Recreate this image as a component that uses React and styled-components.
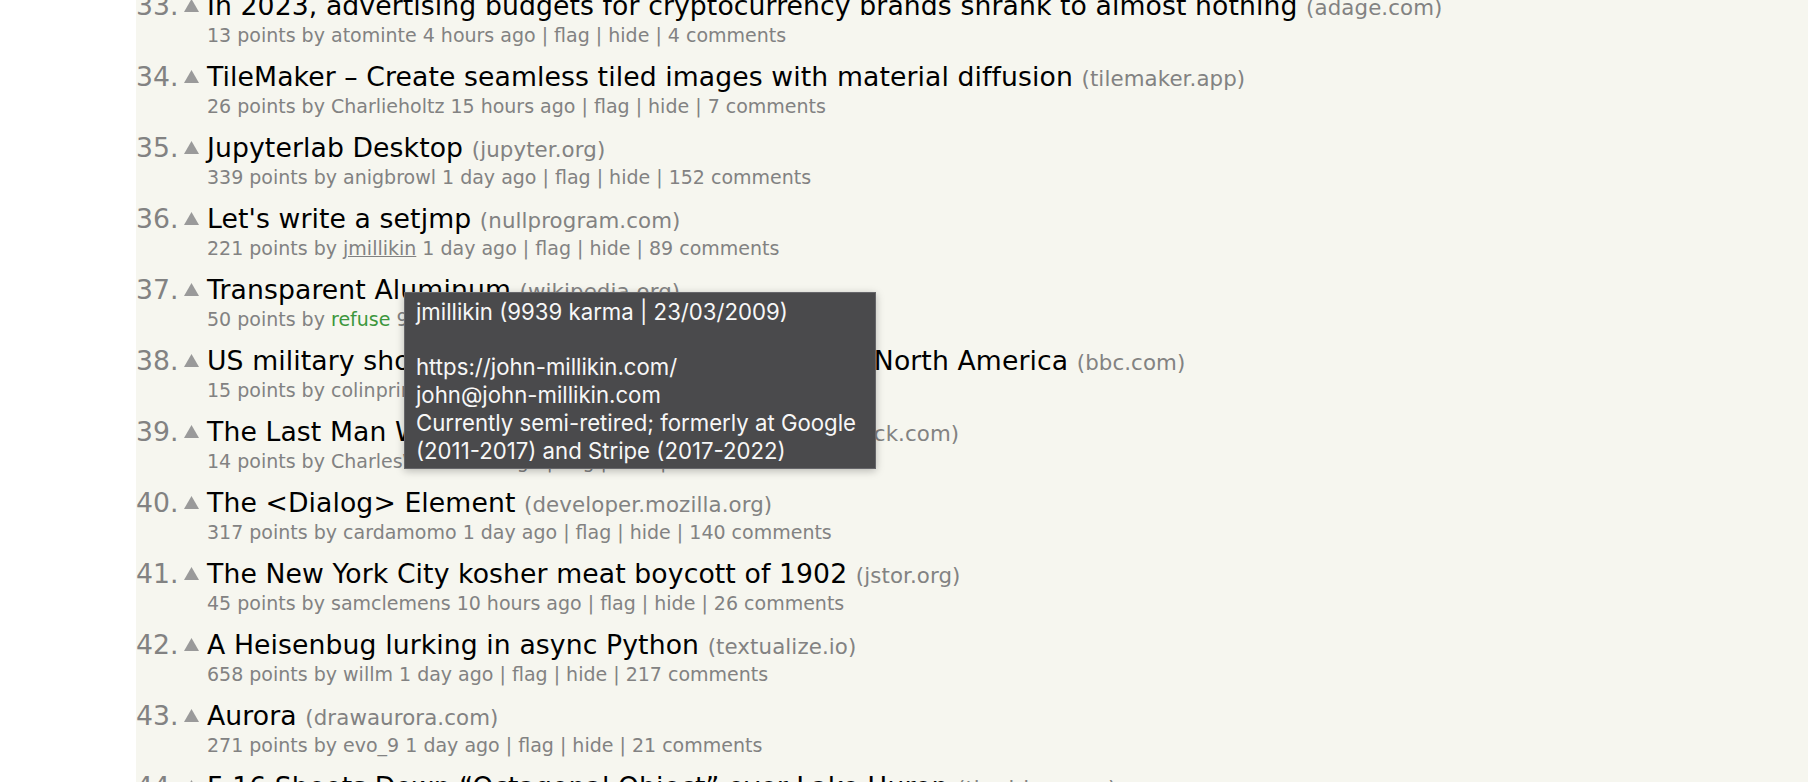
import React from "react"
import styled, { createGlobalStyle } from "styled-components"

const GlobalStyle = createGlobalStyle`
  html, body {
    margin: 0;
    padding: 0;
    background: #ffffff;
    overflow: hidden;
  }
`

const Page = styled.div`
  display: flex;
  height: 782px;
  overflow: hidden;
`

const Gutter = styled.div`
  width: 136px;
  flex-shrink: 0;
  background: #ffffff;
`

const Main = styled.div`
  position: relative;
  flex: 1;
  background: #f6f6ef;
  font-family: "DejaVu Sans", Verdana, sans-serif;
`

const List = styled.div`
  display: flex;
  flex-direction: column;
  margin-top: -12px;
`

const Story = styled.div`
  display: grid;
  grid-template-columns: 41px 30px 1fr;
  grid-template-rows: 36px 24px 11px;
`

const Rank = styled.div`
  text-align: right;
  font-size: 26.67px;
  line-height: 35px;
  color: #828282;
  white-space: nowrap;
`

const Vote = styled.div`
  display: flex;
  justify-content: center;
  align-items: center;
  height: 35px;
  padding-right: 1px;
`

const TitleLine = styled.div`
  font-size: 26.67px;
  line-height: 35px;
  letter-spacing: 0.1px;
  color: #000000;
  white-space: nowrap;
`

const Site = styled.span`
  font-size: 21.33px;
  letter-spacing: 0.1px;
  color: #828282;
`

const SubLine = styled.div`
  grid-column: 3;
  font-size: 19px;
  line-height: 23px;
  color: #828282;
  white-space: nowrap;
`

const User = styled.span`
  color: ${(p) => (p.$fresh ? "#3c963c" : "#828282")};
  text-decoration: ${(p) => (p.$hover ? "underline" : "none")};
`

const Tooltip = styled.div`
  position: absolute;
  left: 268px;
  top: 292px;
  width: 472px;
  padding: 5px 12px 4px 11px;
  background: #4a4a4c;
  border: 1px solid #66666a;
  box-sizing: border-box;
  box-shadow: 0 2px 8px rgba(0, 0, 0, 0.25);
  color: #f7f7f7;
  font-family: Inter, "Noto Sans", sans-serif;
  font-size: 22.2px;
  line-height: 27.7px;
  white-space: pre-line;
`

const Triangle = () => (
  <svg width="15" height="13" viewBox="0 0 15 13">
    <polygon points="7.5,0 15,13 0,13" fill="#9a9a9a" />
  </svg>
)

const stories = [
  { n: 33, title: "In 2023, advertising budgets for cryptocurrency brands shrank to almost nothing", site: "adage.com", pts: 13, user: "atominte", ago: "4 hours ago", c: 4 },
  { n: 34, title: "TileMaker – Create seamless tiled images with material diffusion", site: "tilemaker.app", pts: 26, user: "Charlieholtz", ago: "15 hours ago", c: 7 },
  { n: 35, title: "Jupyterlab Desktop", site: "jupyter.org", pts: 339, user: "anigbrowl", ago: "1 day ago", c: 152 },
  { n: 36, title: "Let's write a setjmp", site: "nullprogram.com", pts: 221, user: "jmillikin", ago: "1 day ago", c: 89, hover: true },
  { n: 37, title: "Transparent Aluminum", site: "wikipedia.org", pts: 50, user: "refuse", ago: "9 hours ago", c: 31, fresh: true },
  { n: 38, title: "US military shoots down fourth flying object over North America", site: "bbc.com", pts: 15, user: "colinprince", ago: "2 hours ago", c: 3 },
  { n: 39, title: "The Last Man Who Knew Everything Online", site: "substack.com", pts: 14, user: "CharlesW", ago: "6 hours ago", c: 2 },
  { n: 40, title: "The <Dialog> Element", site: "developer.mozilla.org", pts: 317, user: "cardamomo", ago: "1 day ago", c: 140 },
  { n: 41, title: "The New York City kosher meat boycott of 1902", site: "jstor.org", pts: 45, user: "samclemens", ago: "10 hours ago", c: 26 },
  { n: 42, title: "A Heisenbug lurking in async Python", site: "textualize.io", pts: 658, user: "willm", ago: "1 day ago", c: 217 },
  { n: 43, title: "Aurora", site: "drawaurora.com", pts: 271, user: "evo_9", ago: "1 day ago", c: 21 },
  { n: 44, title: "F-16 Shoots Down “Octagonal Object” over Lake Huron", site: "thedrive.com", pts: 88, user: "cwwc", ago: "5 hours ago", c: 64 },
]

export default function App() {
  return (
    <>
      <GlobalStyle />
      <Page>
        <Gutter />
        <Main>
          <List>
            {stories.map((s) => (
              <Story key={s.n}>
                <Rank>{s.n}.</Rank>
                <Vote>
                  <Triangle />
                </Vote>
                <TitleLine>
                  {s.title} <Site>({s.site})</Site>
                </TitleLine>
                <SubLine>
                  {s.pts} points by{" "}
                  <User $fresh={s.fresh} $hover={s.hover}>{s.user}</User> {s.ago} | flag | hide | {s.c} comments
                </SubLine>
              </Story>
            ))}
          </List>
          <Tooltip>
            {"jmillikin (9939 karma | 23/03/2009)\n\u00a0\nhttps://john-millikin.com/\njohn@john-millikin.com\nCurrently semi-retired; formerly at Google\n(2011-2017) and Stripe (2017-2022)"}
          </Tooltip>
        </Main>
      </Page>
    </>
  )
}
